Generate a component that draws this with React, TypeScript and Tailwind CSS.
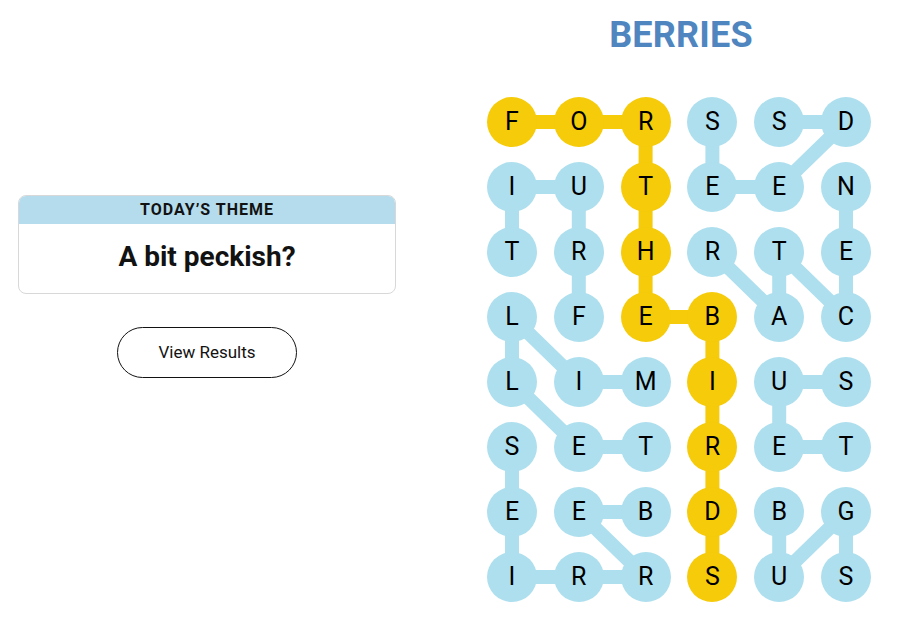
import React from "react";

const GRID = [
  "FORSSD",
  "IUTEEN",
  "TRHRTE",
  "LFEBAC",
  "LIMIUS",
  "SETRET",
  "EEBDBG",
  "IRRSUS",
];

type Cell = [number, number];

const WORDS: Cell[][] = [
  [[3, 1], [2, 1], [1, 1], [1, 0], [2, 0]], // FRUIT
  [[4, 2], [4, 1], [3, 0], [4, 0], [5, 1], [5, 2]], // MILLET
  [[6, 2], [6, 1], [7, 2], [7, 1], [7, 0], [6, 0], [5, 0]], // BERRIES
  [[0, 3], [1, 3], [1, 4], [0, 5], [0, 4]], // SEEDS
  [[1, 5], [2, 5], [3, 5], [2, 4], [3, 4], [2, 3]], // NECTAR
  [[4, 5], [4, 4], [5, 4], [5, 5]], // SUET
  [[6, 4], [7, 4], [6, 5], [7, 5]], // BUGS
];

const SPANGRAM: Cell[] = [
  [0, 0], [0, 1], [0, 2], [1, 2], [2, 2], [3, 2], [3, 3], [4, 3], [5, 3], [6, 3], [7, 3],
];

const SIZE = 50;
const PITCH_X = 66.8;
const PITCH_Y = 65;
const BLUE = "#aedfee";
const YELLOW = "#f5cb0a";

const cx = (c: number) => SIZE / 2 + c * PITCH_X;
const cy = (r: number) => SIZE / 2 + r * PITCH_Y;

const toPoints = (cells: Cell[]) => cells.map(([r, c]) => `${cx(c)},${cy(r)}`).join(" ");

const isSpangram = (r: number, c: number) => SPANGRAM.some(([a, b]) => a === r && b === c);

function Board() {
  return (
    <div className="relative">
      <svg className="absolute inset-0" width={SIZE + 5 * PITCH_X} height={SIZE + 7 * PITCH_Y}>
        {WORDS.map((w, i) => (
          <polyline key={i} points={toPoints(w)} fill="none" stroke={BLUE} strokeWidth={14} strokeLinejoin="round" />
        ))}
        <polyline points={toPoints(SPANGRAM)} fill="none" stroke={YELLOW} strokeWidth={14} strokeLinejoin="round" />
      </svg>
      <div className="relative grid grid-cols-6 gap-x-[16.8px] gap-y-[15px]">
        {GRID.flatMap((row, r) =>
          row.split("").map((ch, c) => (
            <div
              key={`${r}-${c}`}
              className={`w-[50px] h-[50px] rounded-full flex items-center justify-center text-[25px] text-black ${
                isSpangram(r, c) ? "bg-[#f5cb0a]" : "bg-[#aedfee]"
              }`}
            >
              {ch}
            </div>
          ))
        )}
      </div>
    </div>
  );
}

export default function App() {
  return (
    <div className="w-[897px] h-[622px] bg-white flex font-['Roboto',sans-serif] overflow-hidden">
      {/* Left panel */}
      <div className="w-[414px] pl-[18px] pr-[18px] pt-[195px] flex flex-col items-center">
        <div className="w-[378px] rounded-lg border border-[#d8d8d8] overflow-hidden">
          <div className="h-[28px] bg-[#b5dcec] flex items-center justify-center text-[16px] font-bold tracking-[1px] text-[#121212]">
            TODAY’S THEME
          </div>
          <div className="h-[69px] flex items-center justify-center text-[28px] font-bold text-[#121212] pb-[4px]">
            A bit peckish?
          </div>
        </div>
        <button className="mt-[33px] w-[180px] h-[51px] rounded-full border border-[#121212] bg-white text-[17px] text-[#121212]">
          View Results
        </button>
      </div>

      {/* Right panel */}
      <div className="flex-1 flex flex-col items-center pl-[50px] pr-[3px] pt-[14px]">
        <h1 className="pl-[4px] text-[36px] leading-[43px] font-bold text-[#4f86c0] tracking-[0.2px]">BERRIES</h1>
        <div className="mt-[40px]">
          <Board />
        </div>
      </div>
    </div>
  );
}
